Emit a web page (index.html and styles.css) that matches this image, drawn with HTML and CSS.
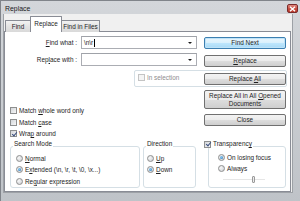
FILE: index.html
```html
<!DOCTYPE html>
<html>
<head>
<meta charset="utf-8">
<link rel="stylesheet" href="styles.css">
</head>
<body>
<div class="win">
  <div class="titlebar">
    <span class="title">Replace</span>
    <span class="close"><svg width="7" height="6" viewBox="0 0 7 6"><path d="M1 0.8 L6 5.2 M6 0.8 L1 5.2" stroke="#fff" stroke-width="1.4"/></svg></span>
  </div>
  <div class="client">
    <div class="tabs">
      <div class="tab t-find"><span>Find</span></div>
      <div class="tab t-replace active"><span>Replace</span></div>
      <div class="tab t-files"><span>Find in Files</span></div>
    </div>
    <div class="panel">
      <div class="row r1">
        <label class="lbl"><u>F</u>ind what :</label>
        <div class="combo"><span class="val">\n\r</span><span class="caret"></span><span class="arrow"></span></div>
        <div class="btn default"><span>Find Next</span></div>
      </div>
      <div class="row r2">
        <label class="lbl">Rep<u>l</u>ace with :</label>
        <div class="combo"><span class="arrow"></span></div>
        <div class="btn"><span><u>R</u>eplace</span></div>
      </div>
      <div class="selbox">
        <span class="chk dis"></span><span class="distext">In selection</span>
        <div class="btn btn-all"><span>Replace <u>A</u>ll</span></div>
      </div>
      <div class="lower">
        <div class="opts">
          <div class="opt"><span class="chk"></span><span>Match <u>w</u>hole word only</span></div>
          <div class="opt"><span class="chk"></span><span>Match <u>c</u>ase</span></div>
          <div class="opt"><span class="chk on"></span><span>Wra<u>p</u> around</span></div>
        </div>
        <div class="btncol">
          <div class="btn tall"><span>Replace All in All <u>O</u>pened<br>Documents</span></div>
          <div class="btn"><span>Close</span></div>
        </div>
      </div>
      <div class="groups">
        <div class="group gsearch">
          <span class="gtitle"><span>Search Mode</span></span>
          <div class="opt"><span class="rad"></span><span><u>N</u>ormal</span></div>
          <div class="opt"><span class="rad on"></span><span>E<u>x</u>tended (\n, \r, \t, \0, \x...)</span></div>
          <div class="opt"><span class="rad"></span><span>Re<u>g</u>ular expression</span></div>
        </div>
        <div class="group gdir">
          <span class="gtitle"><span>Direction</span></span>
          <div class="opt"><span class="rad"></span><span><u>U</u>p</span></div>
          <div class="opt"><span class="rad on"></span><span><u>D</u>own</span></div>
        </div>
        <div class="group gtrans">
          <span class="gtitle gtitle-chk"><span class="chk on"></span><span>Transparenc<u>y</u></span></span>
          <div class="opt"><span class="rad on"></span><span>On losing focus</span></div>
          <div class="opt"><span class="rad"></span><span>Always</span></div>
          <div class="slider"><span class="track"></span><span class="thumb"></span></div>
        </div>
      </div>
    </div>
  </div>
</div>
</body>
</html>
```
FILE: styles.css
```css
* { box-sizing: border-box; margin: 0; padding: 0; }
html, body { margin: 0; width: 300px; height: 201px; overflow: hidden; background: #b8bcc2; }
body { font-family: "Liberation Sans", Arial, sans-serif; font-size: 6.4px; color: #1e1e1e; }
u { text-decoration: underline; text-underline-offset: 1px; text-decoration-thickness: 0.6px; }

.win {
  width: 300px; height: 201px;
  display: flex; flex-direction: column;
  background: linear-gradient(#d3d6da, #bfc3c8);
  border-left: 1px solid #80848a;
  border-top: 1px solid #80848a;
}
.titlebar {
  height: 13px; display: flex; align-items: center; justify-content: space-between;
  padding: 0 2px 0 4px;
}
.title { font-size: 6.9px; color: #1a1a1a; margin-top: 2px; }
.close {
  width: 11px; height: 9px; margin-top: 2px;
  border: 1px solid #7a2b2b; border-radius: 2px;
  background: linear-gradient(#e08a80, #c64a3c 55%, #b7382b);
  display: flex; align-items: center; justify-content: center;
}
.client {
  flex: 1; margin: 0 7px 8px 2px;
  background: #f0f0f0;
  display: flex; flex-direction: column;
  border: 1px solid #9da1a6; border-top: none;
}
.tabs { height: 17px; display: flex; align-items: flex-end; padding-left: 1px; }
.tab {
  height: 12px; margin-bottom: -1px;
  border: 1px solid #898c95; border-bottom: none; border-radius: 1px 1px 0 0;
  background: linear-gradient(#f2f2f2, #e3e3e3 50%, #d9d9d9);
  display: flex; align-items: center; justify-content: center;
  position: relative;
}
.t-find { width: 26px; }
.t-replace { width: 32px; }
.t-files { width: 39px; margin-left: -1px; }
.tab.active { height: 16px; background: #fff; z-index: 2; margin-left: -1px; align-items: flex-start; padding-top: 3px; }
.panel {
  flex: 1; margin: 0 1px 0 0;
  background: #fff; border: 1px solid #898c95;
  padding-top: 4px;
  display: flex; flex-direction: column;
}
.row { display: flex; align-items: flex-start; height: 13px; }
.r2 { margin-top: 4px; height: 14px; }
.lbl { width: 72px; margin-right: 4px; text-align: right; line-height: 13px; }
.combo {
  width: 116px; height: 13px; position: relative;
  border: 1px solid #abadb3; border-top-color: #9fa2a8; background: #fff;
  display: flex; align-items: center; padding-left: 2px;
}
.val { line-height: 11px; }
.caret { width: 1px; height: 8px; background: #000; margin-left: 1px; }
.arrow {
  position: absolute; right: 4px; top: 4.5px;
  width: 0; height: 0;
  border-left: 2px solid transparent; border-right: 2px solid transparent; border-top: 2.5px solid #1a1a1a;
}
.btn {
  width: 82px; height: 12px; margin-left: 7px; margin-top: 1px;
  border: 1px solid #707070; border-radius: 2px;
  background: linear-gradient(#f3f3f3, #ebebeb 50%, #dddddd 51%, #cfcfcf);
  display: flex; align-items: center; justify-content: center; text-align: center;
  line-height: 8px;
}
.r2 .btn { margin-top: 2px; }
.btn.default {
  border-color: #3c7fb1;
  background: linear-gradient(#eaf6fd, #d9f0fc 50%, #bee6fd 51%, #a7d9f5);
  box-shadow: inset 0 0 0 1px #bfe3f8;
}
.selbox {
  margin: 3px 0 0 129px; width: 153px; height: 17px;
  border: 1px solid #d5dfe5; border-radius: 2px;
  display: flex; align-items: center; padding-left: 3px;
}
.selbox .chk { margin-top: -3px; margin-right: 2px; }
.distext { color: #8d8d8d; margin-top: -3px; }
.btn-all { margin-left: auto; margin-top: 0; }
.lower { display: flex; justify-content: space-between; }
.opts { margin: 18px 0 0 5px; }
.opt { display: flex; align-items: center; height: 11.5px; white-space: nowrap; }
.btncol { display: flex; flex-direction: column; margin-right: 4px; padding-top: 3px; }
.btncol .btn { margin-left: 0; margin-top: 0; }
.btncol .btn.tall { height: 19px; margin-bottom: 5px; }

.chk {
  width: 7px; height: 7px; flex: none; margin-right: 2px; position: relative;
  border: 1px solid #8e8f8f;
  background: linear-gradient(135deg, #d3d6da, #f7f7f7);
}
.chk.dis { border-color: #c4c4c4; background: #f4f4f4; }
.chk.on::after {
  content: ""; position: absolute; left: 1.5px; top: -0.5px;
  width: 2px; height: 4px;
  border-right: 1.2px solid #3b4f7e; border-bottom: 1.2px solid #3b4f7e;
  transform: rotate(40deg);
}
.rad {
  width: 7px; height: 7px; flex: none; margin-right: 2px; border-radius: 50%;
  border: 1px solid #8e8f8f;
  background: radial-gradient(circle at 35% 35%, #f8f8f8, #c9ccd1);
  position: relative;
}
.rad.on::after {
  content: ""; position: absolute; left: 1px; top: 1px; width: 3px; height: 3px; border-radius: 50%;
  background: radial-gradient(circle at 40% 40%, #8fd0f5, #1f6fb8);
}

.groups { display: flex; margin: 6.5px 0 0 5px; height: 42px; }
.group {
  position: relative; height: 42px;
  border: 1px solid #d5dfe5; border-radius: 3px;
  padding-top: 5.5px;
}
.gsearch { width: 130px; padding-left: 5px; }
.gdir { width: 53px; margin-left: 3px; padding-left: 3px; }
.gtrans { width: 78px; margin-left: 12px; padding-left: 9px; padding-top: 4.5px; }
.gtitle {
  position: absolute; top: -7px; left: 2px;
  background: #fff; padding: 0 1px; line-height: 8px;
  display: flex; align-items: center; white-space: nowrap;
}
.gtitle-chk { left: -5px; padding-left: 0; }
.slider { position: relative; height: 8px; margin: 1px 0 0 5px; width: 42px; }
.track { position: absolute; left: 0; right: 0; top: 3px; height: 1px; background: #b7b7b7; border-bottom: 1px solid #e6e6e6; }
.thumb {
  position: absolute; left: 29px; top: 0; width: 3px; height: 7px;
  border: 1px solid #9a9a9a; border-radius: 1px; background: #ececec;
}
```
